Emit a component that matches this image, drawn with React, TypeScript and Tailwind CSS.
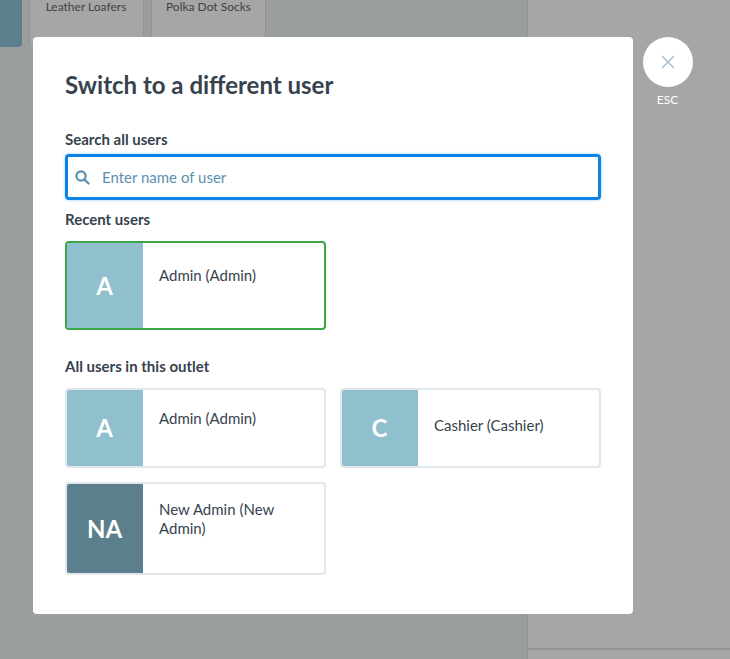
import { X } from 'lucide-react';

type User = { initials: string; name: string; height: string; top: string; avatar: string; border: string };

function UserCard({ user }: { user: User }) {
  return (
    <div className={`flex overflow-hidden rounded border-2 bg-white ${user.height} ${user.border}`}>
      <div className={`flex w-[76px] shrink-0 items-center justify-center pr-[1px] text-2xl font-bold text-white ${user.avatar}`}>
        {user.initials}
      </div>
      <div className={`pl-4 pr-4 text-[15px] leading-[19px] text-[#36434e] ${user.top}`}>{user.name}</div>
    </div>
  );
}

const recent: User = { initials: 'A', name: 'Admin (Admin)', height: 'h-[89px]', top: 'pt-[23px]', avatar: 'bg-[#90c0ce]', border: 'border-[#3ba548]' };
const admin: User = { initials: 'A', name: 'Admin (Admin)', height: 'h-[80px]', top: 'pt-[19px]', avatar: 'bg-[#90c0ce]', border: 'border-[#e2e7eb]' };
const cashier: User = { initials: 'C', name: 'Cashier (Cashier)', height: 'h-[80px]', top: 'pt-[26px]', avatar: 'bg-[#90c0ce]', border: 'border-[#e2e7eb]' };
const newAdmin: User = { initials: 'NA', name: 'New Admin (New Admin)', height: 'h-[93px]', top: 'pt-[16px]', avatar: 'bg-[#5b7f8c]', border: 'border-[#e2e7eb]' };

export default function App() {
  return (
    <div className="relative flex h-[659px] w-[730px] overflow-hidden bg-[#a6a6a6] font-['Lato',sans-serif]">
      <div className="flex w-[528px] shrink-0 items-start gap-[7px] border-r border-[#8f9393] bg-[#9a9e9e]">
        <div className="h-[47px] w-[22px] rounded-br bg-[#5b7f8c]" />
        <div className="h-[47px] w-[115px] rounded-b border-x border-[#8f9393] bg-[#a6a6a6] pr-[1px] text-center text-xs leading-[14px] text-[#3d4347]">
          Leather Loafers
        </div>
        <div className="h-[47px] w-[115px] rounded-b border-x border-[#8f9393] bg-[#a6a6a6] text-center text-xs leading-[14px] text-[#3d4347]">
          Polka Dot Socks
        </div>
      </div>
      <div className="flex-1">
        <div className="mt-[648px] h-[2px] bg-[#8f9393]" />
      </div>

      <div className="absolute left-[33px] top-[37px] h-[577px] w-[600px] rounded bg-white px-8 pt-[32px]">
        <h1 className="text-2xl font-bold leading-[32px] text-[#36434e]">Switch to a different user</h1>
        <label className="mt-[29px] block text-[15px] font-bold leading-[18px] text-[#36434e]">Search all users</label>
        <div className="mt-[6px] flex h-[46px] items-center gap-[12px] rounded border-[3px] border-[#0b84e6] pl-[7px] shadow-[0_0_3px_#8cc4f2]">
          <svg width="15" height="15" viewBox="0 0 15 15" fill="none" stroke="#5c8cab" strokeWidth="2.2" strokeLinecap="round">
            <circle cx="6" cy="6" r="4.6" />
            <path d="M9.5 9.5 13.5 13.5" />
          </svg>
          <span className="text-[15px] text-[#5d8fb0]">Enter name of user</span>
        </div>
        <h2 className="mt-[10px] text-[15px] font-bold leading-[18px] text-[#36434e]">Recent users</h2>
        <div className="mt-[13px] grid grid-cols-2 gap-[14px]">
          <UserCard user={recent} />
        </div>
        <h2 className="mt-[27px] text-[15px] font-bold leading-[18px] text-[#36434e]">All users in this outlet</h2>
        <div className="mt-[13px] grid grid-cols-2 items-start gap-[14px]">
          <UserCard user={admin} />
          <UserCard user={cashier} />
          <UserCard user={newAdmin} />
        </div>
      </div>

      <div className="absolute left-[643px] top-[37px] flex w-[50px] flex-col items-center">
        <div className="flex size-[50px] items-center justify-center rounded-full bg-white">
          <X size={22} strokeWidth={1.5} className="text-[#9dbcd2]" />
        </div>
        <span className="mt-[6px] pr-[1px] text-xs leading-[14px] text-white">ESC</span>
      </div>
    </div>
  );
}
